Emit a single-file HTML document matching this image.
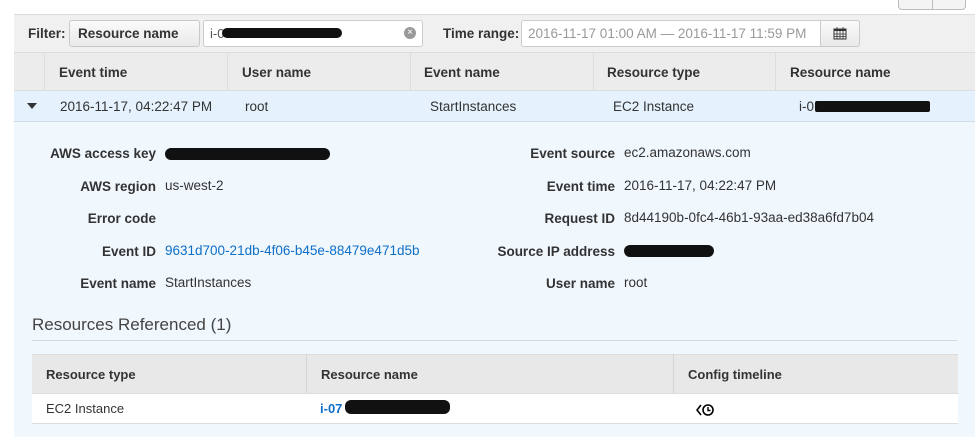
<!DOCTYPE html>
<html><head><style>
*{box-sizing:border-box;margin:0;padding:0}
body{width:975px;height:437px;overflow:hidden;background:#fff;font-family:"Liberation Sans",Arial,sans-serif;color:#333;position:relative}
.a{position:absolute}
.blk{background:#111;border-radius:6px;position:absolute}
.lbl{position:absolute;font-weight:bold;font-size:13.5px;text-align:right;color:#333}
.val{position:absolute;font-size:13.5px;color:#333}
.th{position:absolute;font-weight:bold;font-size:13.5px;color:#333}
</style></head><body>
<div class="a" style="left:898px;top:-4px;width:68px;height:14px;border:1px solid #bbb;border-radius:4px;background:#f4f4f4"></div>
<div class="a" style="left:932px;top:-4px;width:1px;height:14px;background:#bbb"></div>
<div class="a" style="left:14px;top:14px;width:961px;height:39px;background:#f0f0f0;border-top:1px solid #ddd;border-bottom:1px solid #ddd"></div>
<div class="th" style="left:28px;top:26px">Filter:</div>
<div class="a" style="left:69px;top:20px;width:131px;height:27px;border:1px solid #c8c8c8;border-radius:3px;background:linear-gradient(#fafafa,#e9e9e9);font-weight:bold;font-size:13.5px;padding:5px 8px">Resource name</div>
<div class="a" style="left:203px;top:20px;width:220px;height:27px;border:1px solid #ccc;border-radius:3px;background:#fff;font-size:13px;padding:5px 6px;color:#555">i-07</div>
<div class="blk" style="left:222px;top:28px;width:120px;height:10px"></div>
<div class="a" style="left:404px;top:27px;width:12px;height:12px;border-radius:50%;background:#999;color:#fff;font-size:10px;line-height:12px;text-align:center">×</div>
<div class="th" style="left:443px;top:26px">Time range:</div>
<div class="a" style="left:521px;top:20px;width:339px;height:27px;border:1px solid #ccc;border-radius:3px;background:#fff;font-size:13.5px;padding:5px 6px;color:#999">2016-11-17 01:00 AM — 2016-11-17 11:59 PM</div>
<div class="a" style="left:820px;top:20px;width:40px;height:27px;border:1px solid #ccc;border-radius:0 3px 3px 0;background:linear-gradient(#fafafa,#e9e9e9)"></div>
<svg class="a" style="left:833px;top:27px" width="14" height="13" viewBox="0 0 14 13"><rect x="1" y="2" width="12" height="10" fill="none" stroke="#333"/><rect x="1" y="2" width="12" height="2" fill="#333"/><path d="M4 0v3M10 0v3M1 7h12M1 9.5h12M4 4v8M7 4v8M10 4v8" stroke="#333" stroke-width=".8"/></svg>
<div class="a" style="left:14px;top:53px;width:961px;height:38px;background:#ececec;border-bottom:1px solid #ddd"></div>
<div class="a" style="left:44px;top:53px;width:1px;height:38px;background:#ddd"></div>
<div class="a" style="left:227px;top:53px;width:1px;height:38px;background:#ddd"></div>
<div class="a" style="left:410px;top:53px;width:1px;height:38px;background:#ddd"></div>
<div class="a" style="left:593px;top:53px;width:1px;height:38px;background:#ddd"></div>
<div class="a" style="left:775px;top:53px;width:1px;height:38px;background:#ddd"></div>
<div class="th" style="left:59px;top:65px">Event time</div>
<div class="th" style="left:242px;top:65px">User name</div>
<div class="th" style="left:424px;top:65px">Event name</div>
<div class="th" style="left:607px;top:65px">Resource type</div>
<div class="th" style="left:790px;top:65px">Resource name</div>
<div class="a" style="left:14px;top:91px;width:961px;height:31px;background:#e5f1fc;border-bottom:1px solid #d0dbe5"></div>
<div class="a" style="left:27px;top:103px;width:0;height:0;border-left:5px solid transparent;border-right:5px solid transparent;border-top:6px solid #333"></div>
<div class="val" style="left:60px;top:99px">2016-11-17, 04:22:47 PM</div>
<div class="val" style="left:245px;top:99px">root</div>
<div class="val" style="left:430px;top:99px">StartInstances</div>
<div class="val" style="left:613px;top:99px">EC2 Instance</div>
<div class="val" style="left:799px;top:99px">i-0</div>
<div class="blk" style="left:815px;top:101px;width:115px;height:11px;border-radius:2px"></div>
<div class="a" style="left:14px;top:122px;width:961px;height:315px;background:#f0f7fd"></div>
<div class="lbl" style="left:0;width:156px;top:146px">AWS access key</div>
<div class="blk" style="left:165px;top:148px;width:165px;height:12px"></div>
<div class="lbl" style="left:0;width:156px;top:179px">AWS region</div><div class="val" style="left:165px;top:178px">us-west-2</div>
<div class="lbl" style="left:0;width:156px;top:211px">Error code</div>
<div class="lbl" style="left:0;width:156px;top:244px">Event ID</div><div class="val" style="left:165px;top:243px;color:#0e6fc7">9631d700-21db-4f06-b45e-88479e471d5b</div>
<div class="lbl" style="left:0;width:156px;top:276px">Event name</div><div class="val" style="left:165px;top:275px">StartInstances</div>
<div class="lbl" style="left:400px;width:215px;top:146px">Event source</div><div class="val" style="left:624px;top:145px">ec2.amazonaws.com</div>
<div class="lbl" style="left:400px;width:215px;top:179px">Event time</div><div class="val" style="left:624px;top:178px">2016-11-17, 04:22:47 PM</div>
<div class="lbl" style="left:400px;width:215px;top:211px">Request ID</div><div class="val" style="left:624px;top:210px">8d44190b-0fc4-46b1-93aa-ed38a6fd7b04</div>
<div class="lbl" style="left:400px;width:215px;top:244px">Source IP address</div><div class="blk" style="left:624px;top:245px;width:90px;height:12px"></div>
<div class="lbl" style="left:400px;width:215px;top:276px">User name</div><div class="val" style="left:624px;top:275px">root</div>
<div class="a" style="left:32px;top:315px;font-size:17px;color:#444">Resources Referenced (1)</div>
<div class="a" style="left:32px;top:340px;width:926px;height:1px;background:#d5dbe0"></div>
<div class="a" style="left:32px;top:354px;width:926px;height:39px;background:#e8e8e8;border-top:1px solid #ddd"></div>
<div class="a" style="left:306px;top:354px;width:1px;height:39px;background:#d5d5d5"></div>
<div class="a" style="left:673px;top:354px;width:1px;height:39px;background:#d5d5d5"></div>
<div class="th" style="left:46px;top:367px;font-size:13px">Resource type</div>
<div class="th" style="left:321px;top:367px;font-size:13px">Resource name</div>
<div class="th" style="left:688px;top:367px;font-size:13px">Config timeline</div>
<div class="a" style="left:32px;top:393px;width:926px;height:31px;background:#fff;border-top:1px solid #ddd;border-bottom:1px solid #ddd"></div>
<div class="val" style="left:46px;top:401px;font-size:13px">EC2 Instance</div>
<div class="val" style="left:320px;top:401px;font-size:13px;color:#0e6fc7;font-weight:bold">i-07</div>
<div class="blk" style="left:345px;top:400px;width:105px;height:14px"></div>
<svg class="a" style="left:696px;top:403px" width="22" height="14" viewBox="0 0 22 14"><path d="M5 2L1 7l4 5" fill="none" stroke="#000" stroke-width="1.6"/><circle cx="12" cy="7" r="5" fill="none" stroke="#000" stroke-width="1.6"/><path d="M12 4v3.5h2.5" fill="none" stroke="#000" stroke-width="1.4"/></svg>
</body></html>
